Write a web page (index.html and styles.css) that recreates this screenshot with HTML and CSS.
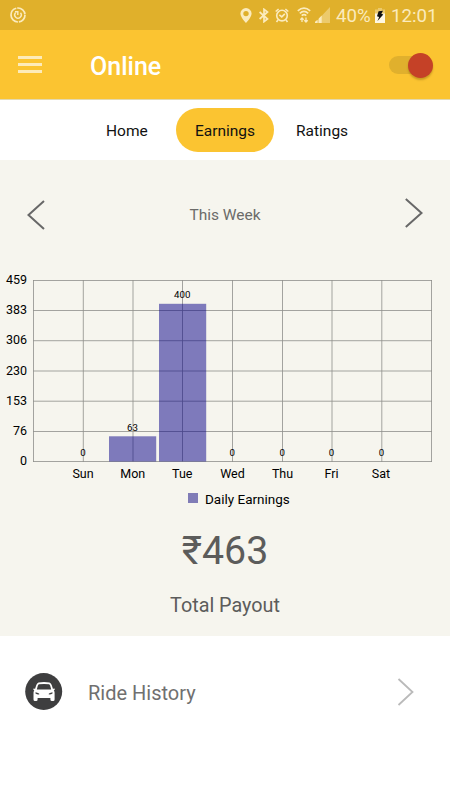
FILE: index.html
```html
<!DOCTYPE html>
<html lang="en">
<head>
<meta charset="utf-8">
<title>Earnings</title>
<link rel="stylesheet" href="styles.css">
</head>
<body>
<header class="status">
  <svg class="sync" width="16" height="16" viewBox="0 0 16 16" fill="none" stroke="currentColor">
    <circle cx="8" cy="8" r="7" stroke-width="1.7" stroke-dasharray="10 1 20 1 11 1"/>
    <path d="M5.500 5.700A3.300 3.300 0 1 0 10.500 5.700M5 4.800H7.800V8" stroke-width="1.400"/>
  </svg>
  <svg class="pin" width="12" height="15" viewBox="0 0 12 15" fill="currentColor">
    <path fill-rule="evenodd" d="M6 0a5.6 5.6 0 0 0-5.6 5.6C.4 9.500 6 15 6 15s5.600-5.500 5.600-9.400A5.600 5.600 0 0 0 6 0zm0 2.900a2.700 2.700 0 1 1 0 5.400 2.700 2.700 0 0 1 0-5.400z"/>
  </svg>
  <svg class="bt" width="10" height="15" viewBox="0 0 10 15" fill="none" stroke="currentColor" stroke-width="1.7">
    <path d="M.6 4l7.900 7L5 13.700V1.300L8.500 4 .6 11"/>
  </svg>
  <svg class="alarm" width="14" height="15" viewBox="0 0 14 15" fill="none" stroke="currentColor" stroke-width="1.600">
    <circle cx="7" cy="7.600" r="5.300"/>
    <path d="M.7 3.500L3.600 1M13.300 3.500L10.400 1M3 12l-1.500 2M11 12l1.500 2M4.300 6.800l2.500 2.100 3-3"/>
  </svg>
  <svg class="wifi" width="14" height="16" viewBox="0 0 14 16" fill="none" stroke="currentColor" stroke-width="1.700">
    <path d="M.8 3.800Q7-1.600 13.200 3.800M2.800 6.300Q7 2.600 11.200 6.300M4.700 8.600Q7 6.500 9.300 8.600"/>
    <path d="M5 11V15M3.300 12.700L5 11l1.700 1.700M9 10.500V15M7.300 13.200L9 15l1.700-1.800" stroke-width="1.300"/>
  </svg>
  <svg class="signal" width="15" height="16" viewBox="0 0 15 16" fill="currentColor">
    <path opacity=".45" d="M15 0v16H0z"/>
    <path d="M0 16v-1.300l2.500-2V16zM3.700 16v-4.600L6.700 8.500V16z"/>
  </svg>
  <span class="percent">40%</span>
  <svg class="battery" width="10" height="15" viewBox="0 0 10 15">
    <path opacity=".45" fill="currentColor" d="M3 0h4v1.500h3V9H0V1.500h3z"/>
    <path fill="#fff8e2" d="M0 5.500h10V15H0z"/>
    <path fill="#111" d="M3.600 3.300L8 2.800 6.300 5.800 8.300 6.600 2.500 13 4.100 9.100 2 8.300z"/>
  </svg>
  <time class="clock">12:01</time>
</header>
<div class="appbar">
  <div class="burger"><i></i><i></i><i></i></div>
  <h1>Online</h1>
  <div class="switch"><div class="knob"></div></div>
</div>
<nav class="tabs">
  <a class="tab home">Home</a>
  <a class="tab active">Earnings</a>
  <a class="tab ratings">Ratings</a>
</nav>
<main class="panel">
  <div class="week">
    <svg class="prev" width="18" height="30" viewBox="0 0 18 30"><path d="M17 1L1.500 15 17 29"/></svg>
    <span>This Week</span>
    <svg class="next" width="18" height="30" viewBox="0 0 18 30"><path d="M.8 1L16.500 15 .8 29"/></svg>
  </div>
  <svg class="chart" width="450" height="250" viewBox="0 265 450 250">
    <g class="grid">
      <path d="M33 280.500H432M33 310.500H432M33 340.700H432M33 371H432M33 401.200H432M33 431.500H432M33 461.500H432"/>
      <path d="M33.500 280V462M83.300 280V462M133 280V462M182.500 280V462M232.500 280V462M282.500 280V462M332 280V462M381.800 280V462M431.500 280V462"/>
    </g>
    <g class="bars">
      <rect x="109" y="436.300" width="47.200" height="25.200"/>
      <rect x="159" y="303.800" width="47.200" height="157.700"/>
    </g>
    <g class="ylabels">
      <text x="27" y="284">459</text><text x="27" y="314">383</text><text x="27" y="344">306</text><text x="27" y="374.500">230</text><text x="27" y="404.500">153</text><text x="27" y="434.700">76</text><text x="27" y="465.300">0</text>
    </g>
    <g class="xlabels">
      <text x="83" y="478.300">Sun</text><text x="132.800" y="478.300">Mon</text><text x="182.300" y="478.300">Tue</text><text x="232.500" y="478.300">Wed</text><text x="282.500" y="478.300">Thu</text><text x="331.500" y="478.300">Fri</text><text x="381" y="478.300">Sat</text>
    </g>
    <g class="values">
      <text x="83" y="455.500">0</text><text x="132.500" y="430.700">63</text><text x="182.200" y="298">400</text><text x="232.200" y="455.500">0</text><text x="282.200" y="455.500">0</text><text x="331.500" y="455.500">0</text><text x="381.500" y="455.500">0</text>
    </g>
    <rect class="key" x="188" y="493" width="10" height="10"/>
    <text class="legend" x="205" y="503.700">Daily Earnings</text>
  </svg>
  <div class="amount">₹463</div>
  <div class="caption">Total Payout</div>
</main>
<section class="history">
  <svg class="car" width="38" height="38" viewBox="0 0 38 38">
    <circle cx="18.700" cy="18.500" r="18.500" fill="#3e3e3f"/>
    <path fill="#fff" fill-rule="evenodd" d="M13.500 9.500Q19 8.700 24.500 9.500 26 10 26.700 12L28 16l1.300-.7.500 1.400-1 .8q.8.800.8 2.200V26.500q0 1.500-1.500 1.500h-1.200q-1.500 0-1.500-1.500V25H12.600v1.500q0 1.500-1.500 1.500H10q-1.500 0-1.500-1.500v-6.800q0-1.400.8-2.200l-1-.8.5-1.400L10 16l1.300-4Q12 10 13.500 9.500zM14 11.300q-.8.200-1.200 1.500l-1 3.700H26.200l-1-3.700q-.4-1.300-1.200-1.500-5-.7-10 0zM10.500 19.300v1.200q2 1.300 3.900.8.200-1.200-3.900-2zM27.500 19.300q-4.100.8-3.900 2 1.900.5 3.900-.8z"/>
  </svg>
  <span>Ride History</span>
  <svg class="go" width="17" height="28" viewBox="0 0 17 28"><path d="M1.500 1L15.500 14 1.500 27"/></svg>
</section>
</body>
</html>
```
FILE: styles.css
```css
* { box-sizing: border-box; }
body {
  margin: 0;
  width: 450px;
  height: 800px;
  overflow: hidden;
  background: #fff;
  font-family: Roboto, "Noto Sans", sans-serif;
}
svg { display: block; flex: none; }

.status {
  display: flex;
  align-items: flex-start;
  height: 30px;
  padding: 7px 12px 0 10px;
  background: #e0b02b;
  color: #fbebbd;
}
.status svg { margin-top: 1px; }
.status .sync { margin-top: 0; }
.pin { margin-left: 214px; }
.bt { margin-left: 7px; }
.alarm { margin-left: 6px; }
.wifi { margin-left: 8px; }
.status .wifi, .status .signal { margin-top: 0; }
.signal { margin-left: 4px; }
.percent, .clock { font-size: 18.700px; line-height: 18px; white-space: nowrap; }
.percent { width: 38px; margin-left: 6px; }
.battery { margin-left: 1px; }
.clock { margin-left: 6px; }

.appbar {
  display: flex;
  align-items: center;
  height: 70px;
  padding: 0 17px 0 18px;
  background: #fbc431;
  border-bottom: 1px solid #e3d9b0;
}
.burger { display: flex; flex-direction: column; gap: 4px; width: 24px; }
.burger i { height: 3px; background: #fdebb9; }
.appbar h1 { margin: 4px 0 0 48px; font-size: 25px; line-height: 30px; font-weight: 500; color: #fff; }
.switch {
  width: 41px;
  height: 18px;
  margin: 1px 3px 0 auto;
  border-radius: 9px;
  background: #e0b02d;
  display: flex;
  align-items: center;
  justify-content: flex-end;
}
.knob { flex: none; width: 25px; height: 25px; margin-right: -3px; border-radius: 50%; background: #c54127; box-shadow: 0 2px 2px rgba(90, 60, 0, .3); }

.tabs { display: flex; align-items: center; height: 60px; padding-left: 106px; font-size: 15.500px; color: #111; }
.tab { padding-top: 2px; line-height: 42px; white-space: nowrap; }
.home { width: 70px; }
.active { width: 98px; border-radius: 22px; background: #fbc431; text-align: center; }
.ratings { margin-left: 22px; }

.panel { height: 476px; background: #f6f5ee; }
.week { display: flex; justify-content: space-between; height: 105px; padding: 38px 27px 0; color: #6b6b69; font-size: 15.500px; }
.week span { line-height: 34px; }
.week path { fill: none; stroke: #686868; stroke-width: 2; }
.prev { margin-top: 2px; }

.chart { font-family: Roboto, sans-serif; }
.grid path { fill: none; stroke: #8e8e8b; stroke-width: 1; stroke-opacity: .8; }
.bars rect { fill: #050087; fill-opacity: .5; }
.key { fill: #807cb6; }
.ylabels { font-size: 12.500px; text-anchor: end; }
.xlabels { font-size: 12.500px; text-anchor: middle; }
.values { font-size: 9.700px; text-anchor: middle; }
.legend { font-size: 13.500px; }

.amount { height: 70px; padding-top: 1px; font-size: 39.300px; line-height: 70px; text-align: center; color: #5c5c5b; }
.caption { padding-top: 1px; font-size: 19.800px; line-height: 40px; text-align: center; color: #5c5c5b; }

.history { display: flex; align-items: center; height: 112px; padding: 0 36px 0 25px; }
.history span { margin: 2px 0 0 25px; font-size: 20px; color: #707070; }
.go { margin-left: auto; }
.go path { fill: none; stroke: #bababa; stroke-width: 1.800; }
```
